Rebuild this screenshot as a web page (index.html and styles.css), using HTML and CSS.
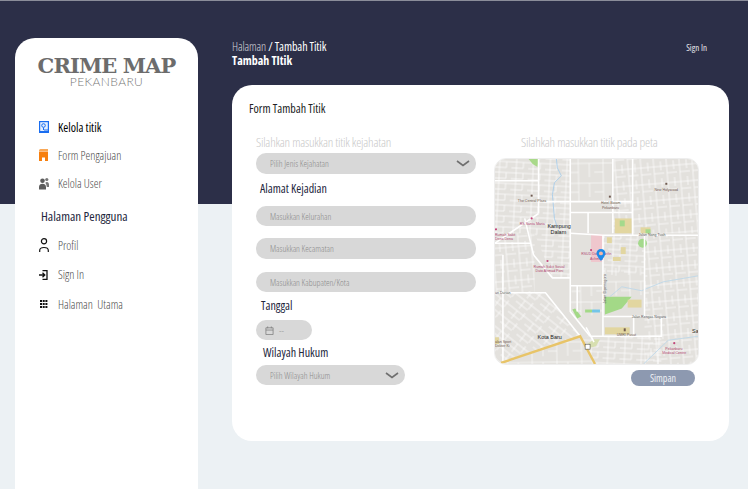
FILE: index.html
```html
<!DOCTYPE html>
<html lang="id">
<head>
<meta charset="utf-8">
<title>Crime Map Pekanbaru</title>
<link rel="stylesheet" href="styles.css">
</head>
<body>
<div class="page">
  <aside class="sidebar">
    <div class="logo">
      <div class="logo-title">CRIME MAP</div>
      <div class="logo-sub">PEKANBARU</div>
    </div>
    <nav class="nav">
      <a class="nav-item active">
        <svg class="ico" viewBox="0 0 10 14"><rect x="0" y="1" width="10" height="12" fill="#1a6df0"/><rect x="1.200" y="2.200" width="7.600" height="8.800" fill="#e3efff"/><circle cx="4.500" cy="5.500" r="1.800" fill="none" stroke="#1a6df0"/><path d="M4.500 7.500V10M5 10H9" stroke="#1a6df0"/></svg>
        <span>Kelola titik</span>
      </a>
      <a class="nav-item">
        <svg class="ico" viewBox="0 0 10 14"><path d="M0 2.500Q0 1 1.500 1H9V3H0z" fill="#f9a857"/><path d="M0 3.500H9V13H6V9.500H3V13H0z" fill="#f77f0e"/></svg>
        <span>Form Pengajuan</span>
      </a>
      <a class="nav-item">
        <svg class="ico" viewBox="0 0 10 14"><circle cx="3.500" cy="4.800" r="2.300" fill="#5c5c5c"/><path d="M0 13.500V11Q.3 7.800 3.500 7.800T7 11v2.500z" fill="#5c5c5c"/><circle cx="7.800" cy="3.500" r="1.600" fill="#777"/><path d="M7.800 6Q10 6 10 9v2H7.800Q7.500 8.200 6.300 6.800 7 6 7.800 6z" fill="#777"/></svg>
        <span>Kelola User</span>
      </a>
    </nav>
    <h2 class="nav-heading">Halaman Pengguna</h2>
    <nav class="nav nav-user">
      <a class="nav-item">
        <svg class="ico" viewBox="0 0 10 14"><circle cx="5" cy="3.300" r="2.600" fill="none" stroke="#111" stroke-width="1.200"/><path d="M.7 14V12.500Q.7 9.500 5 9.500t4.300 3V14" fill="none" stroke="#111" stroke-width="1.200"/></svg>
        <span>Profil</span>
      </a>
      <a class="nav-item">
        <svg class="ico" viewBox="0 0 10 14"><path d="M3.500 2.700H8V11.300H3.500" fill="none" stroke="#111" stroke-width="1.300"/><path d="M0 7H5.500M3.500 4.800 5.800 7 3.500 9.200" fill="none" stroke="#111" stroke-width="1.300"/></svg>
        <span>Sign In</span>
      </a>
      <a class="nav-item">
        <svg class="ico" viewBox="0 0 10 14"><path d="M1 3h2v2H1zM3.700 3h2v2h-2zM6.400 3h2v2h-2zM1 6h2v2H1zM3.700 6h2v2h-2zM6.400 6h2v2h-2zM1 9h2v2H1zM3.700 9h2v2h-2zM6.400 9h2v2h-2z" fill="#111"/></svg>
        <span>Halaman&nbsp; Utama</span>
      </a>
    </nav>
  </aside>

  <main class="main">
    <header class="topbar">
      <div>
        <div class="crumb"><span class="crumb-dim">Halaman</span> / Tambah Titik</div>
        <div class="crumb-title">Tambah TItik</div>
      </div>
      <a class="signin">Sign In</a>
    </header>

    <section class="card">
      <h1 class="card-title">Form Tambah Titik</h1>
      <div class="columns">
        <form class="form">
          <p class="hint">Silahkan masukkan titik kejahatan</p>
          <div class="field select"><span>Pilih Jenis Kejahatan</span><svg class="chev" viewBox="0 0 14 7"><path d="M1 1l6 4.500L13 1" fill="none" stroke="#6f6f6f" stroke-width="1.600"/></svg></div>
          <div class="label label-alamat">Alamat Kejadian</div>
          <div class="field f-kel"><span>Masukkan Kelurahan</span></div>
          <div class="field f-kec"><span>Masukkan Kecamatan</span></div>
          <div class="field f-kab"><span>Masukkan Kabupaten/Kota</span></div>
          <div class="label label-tanggal">Tanggal</div>
          <div class="field date"><svg class="cal" viewBox="0 0 10 10"><path d="M1 2h8v7.500H1zM1 4.500h8M3 .5v2M7 .5v2" fill="none" stroke="#777" stroke-width=".8"/></svg><span>--</span></div>
          <div class="label label-wilayah">Wilayah Hukum</div>
          <div class="field select wilayah"><span>Pilih Wilayah Hukum</span><svg class="chev" viewBox="0 0 14 7"><path d="M1 1l6 4.500L13 1" fill="none" stroke="#6f6f6f" stroke-width="1.600"/></svg></div>
        </form>

        <div class="map-col">
          <p class="hint hint-map">Silahkah masukkan titik pada peta</p>
          <svg class="map" viewBox="0 0 205 207" role="img" aria-label="Peta Pekanbaru">
            <defs>
              <pattern id="a" width="17" height="11" patternUnits="userSpaceOnUse" patternTransform="rotate(3)"><path d="M0 2H17M5 0V11M12 2V8M0 8H12" stroke="#fff" stroke-width=".7" fill="none"/></pattern>
              <pattern id="b" width="13" height="17" patternUnits="userSpaceOnUse" patternTransform="rotate(-5)"><path d="M3 0V17M10 0V9M0 5H13M3 12H13" stroke="#fff" stroke-width=".7" fill="none"/></pattern>
              <pattern id="c" width="21" height="13" patternUnits="userSpaceOnUse" patternTransform="rotate(38)"><path d="M0 3H21M7 3V13M15 0V8M0 9H15" stroke="#fff" stroke-width=".7" fill="none"/></pattern>
              <pattern id="d" width="25" height="20" patternUnits="userSpaceOnUse" patternTransform="rotate(-1)"><path d="M0 6H25M9 0V20M20 6V20M0 15H9" stroke="#fff" stroke-width=".6" fill="none"/></pattern>
            </defs>
            <rect width="205" height="207" fill="#e3e1dd"/>
            <rect x="0" y="0" width="76" height="75" fill="url(#a)"/>
            <rect x="76" y="0" width="43" height="43" fill="url(#d)"/>
            <rect x="119" y="0" width="86" height="75" fill="url(#b)"/>
            <rect x="0" y="75" width="40" height="60" fill="url(#b)"/>
            <path d="M0 135H51l35 44-80 27H0z" fill="url(#c)"/>
            <path d="M40 75H76V120H58z" fill="url(#a)"/>
            <rect x="109" y="77" width="42" height="40" fill="url(#a)"/>
            <rect x="151" y="77" width="54" height="130" fill="url(#b)"/>
            <rect x="76" y="128" width="33" height="30" fill="url(#d)"/>
            <path d="M86 179h82v28H101z" fill="url(#a)"/>
            <path d="M6 207 86 179 101 207z" fill="url(#d)"/>
            <rect x="109" y="110" width="42" height="30" fill="url(#d)"/>
            <!-- areas -->
            <path d="M34 0h10l-1 8-5-3z" fill="#a9d98a"/>
            <rect x="77" y="55" width="41" height="19" fill="#e3e1dd"/>
            <rect x="121" y="60" width="17" height="15" fill="#e2d6a0"/>
            <rect x="126" y="62" width="5" height="6" fill="#a4d98c"/>
            <rect x="147" y="69" width="10" height="6" fill="#e2d6a0"/>
            <rect x="152" y="71" width="5" height="4" fill="#a4d98c"/>
            <circle cx="149" cy="85" r="4.500" fill="#a4d98c"/>
            <rect x="97" y="76" width="12" height="28" fill="#efc7cd"/>
            <path d="M111 139h27l-10 12-17 6z" fill="#a3d987"/>
            <rect x="134" y="142" width="14" height="8" fill="#e2d6a0"/>
            <rect x="91" y="152" width="7" height="3" fill="#a3d987"/>
            <rect x="98" y="152" width="8" height="3" fill="#73c5e8"/>
            <path d="M78 152l3-1 6 8-4 2z" fill="#a3d987"/>
            <rect x="111" y="170" width="25" height="7" fill="#e2d6a0"/>
            <path d="M93 187l7-5h6l-4 7-8 2z" fill="#d7dfb0"/>
            <rect x="0" y="180" width="4" height="7" fill="#e2d6a0"/>
            <rect x="113" y="79" width="5" height="6" fill="#e2d6a0"/><rect x="127" y="89" width="5" height="7" fill="#e2d6a0"/><rect x="119" y="99" width="8" height="4" fill="#e2d6a0"/>
            <!-- water -->
            <path d="M62 0l1 9 4 8-7 7-2 12 2 24 3 9" fill="none" stroke="#a7cdea" stroke-width=".9"/>
            <path d="M205 118l-35 6-22 9-20-4-12 10" fill="none" stroke="#b9d6ea" stroke-width=".8"/>
            <path d="M150 207l25-24 30-4" fill="none" stroke="#b9d6ea" stroke-width=".8"/>
            <!-- main roads -->
            <g fill="none" stroke="#fff" stroke-width="1.600">
              <path d="M76 0V154l20 25"/>
              <path d="M119 0V75M139 0V77"/>
              <path d="M44 0V55"/>
              <path d="M0 22H44M0 85H36"/>
              <path d="M44 43H139M76 54H139M94 54V75"/>
              <path d="M76 75l34 2H205"/>
              <path d="M109 77V179M151 77V159"/>
              <path d="M76 128H109M83 128V154"/>
              <path d="M0 135H51l35 44"/>
              <path d="M39 97l19 23h18"/>
              <path d="M8 97V207M30 60l9 37"/>
              <path d="M109 159H168V179H96M140 159V179"/>
              <path d="M44 55 0 85M92 170l8 15"/>
            </g>
            <path d="M6 206 86 179 101 207" fill="none" stroke="#e8c468" stroke-width="2.400"/>
            <!-- place markers -->
            <g fill="#6f5a50">
              <rect x="172" y="24" width="2" height="2"/><rect x="36" y="36" width="2" height="2"/><rect x="115" y="37" width="2" height="2"/><rect x="130" y="171" width="2" height="3"/>
            </g>
            <g fill="#c2467a">
              <circle cx="37" cy="60" r="1.100"/><circle cx="1" cy="71" r="1.100"/><circle cx="53" cy="103" r="1.100"/><circle cx="181" cy="186" r="1.100"/><circle cx="97" cy="92" r="1.100"/>
            </g>
            <!-- labels -->
            <g class="map-label">
              <text x="161" y="32.500" fill="#6f5a50">New Holywood</text>
              <text x="23" y="43.500" fill="#6f5a50">The Central Plaza</text>
              <text x="107" y="45.500" fill="#6f5a50">Hotel Batam</text>
              <text x="108" y="50" fill="#6f5a50">Pekanbaru</text>
              <text x="145" y="77.500" fill="#555">Jalan Nang Tuah</text>
              <text x="25" y="67" fill="#b04a72">RS Santa Maria</text>
              <text x="0" y="77.500" fill="#b04a72">Rumah Sakit</text>
              <text x="0" y="82" fill="#b04a72">Dena Dena</text>
              <text x="87" y="97" fill="#b04a72">RSUD Dokter Arifin</text>
              <text x="96" y="101.500" fill="#b04a72">Achmad</text>
              <text x="39" y="110" fill="#b04a72">Rumah Sakit Sosial</text>
              <text x="41" y="114.500" fill="#b04a72">Dato Ahmad Poni</text>
              <text x="0" y="136.500" fill="#555">an Durian</text>
              <text x="138" y="160.500" fill="#555">Jalan Rengas Negara</text>
              <text x="123" y="178.500" fill="#6f5a50">UMRI Pusat</text>
              <text x="0" y="186" fill="#6f5a50">alan Sport</text>
              <text x="0" y="190" fill="#6f5a50">Dokter Ki</text>
              <text x="172" y="192.500" fill="#b04a72">Pekanbaru</text>
              <text x="169" y="197" fill="#b04a72">Medical Centre</text>
            </g>
            <g class="map-label-big">
              <text x="53" y="70">Kampung</text>
              <text x="56" y="76">Dalam</text>
              <text x="43" y="182">Kota Baru</text>
              <text x="199" y="176">Sa</text>
            </g>
            <text class="map-label-road" transform="translate(112 146) rotate(-90)">Jalan Dipenogoro</text>
            <rect x="91" y="187" width="5" height="5" fill="#fff" stroke="#333" stroke-width=".5"/>
            <!-- pin -->
            <path d="M107 91c-2.800 0-4.500 2-4.500 4.300 0 2.700 4.500 7.700 4.500 7.700s4.500-5 4.500-7.700c0-2.300-1.700-4.300-4.500-4.300z" fill="#1f8ae8"/>
            <circle cx="107" cy="95.300" r="2" fill="#f3b7a6"/>
          </svg>
          <button class="save" type="button">Simpan</button>
        </div>
      </div>
    </section>
  </main>
</div>
</body>
</html>
```
FILE: styles.css
```css
* { box-sizing: border-box; }
html, body { height: 100%; }
body {
  margin: 0;
  overflow: hidden;
  font-family: "Open Sans", Roboto, sans-serif;
  font-stretch: 75%;
  font-weight: 300;
  background: linear-gradient(#8b8d9a 0 1px, #2c2f48 1px 204px, #ecf1f4 204px);
  color: #1c1f33;
}
.page {
  display: grid;
  grid-template-columns: 183px 497px;
  column-gap: 34px;
  padding: 38px 0 0 15px;
  height: 489px;
}
.sidebar {
  background: #fff;
  border-radius: 20px 20px 0 0;
  height: 451px;
  padding-top: 15px;
}
.logo { text-align: center; color: #6c6c6c; }
.logo-title {
  font-family: "DejaVu Serif", serif;
  font-weight: 700;
  font-stretch: normal;
  font-size: 21px;
  letter-spacing: -.9px;
  line-height: 26px;
}
.logo-sub {
  font-family: Lato, sans-serif;
  font-weight: 300;
  font-stretch: normal;
  font-size: 12px;
  letter-spacing: .4px;
  line-height: 11px;
  color: #777;
  margin-top: -3px;
}
.nav { display: flex; flex-direction: column; margin-top: 31px; padding-left: 24px; row-gap: 10px; }
.nav-item { display: flex; align-items: center; height: 18px; font-size: 12px; color: #4c4c4c; }
.nav-item.active { color: #000; font-weight: 400; }
.nav-item span { margin-left: 9px; }
.ico { width: 10px; height: 14px; flex: none; }
.nav-heading { font-size: 13px; font-weight: 400; margin: 15px 0 0 26px; line-height: 18px; color: #23263c; }
.nav-user { margin-top: 11px; row-gap: 11.500px; }
.main { display: flex; flex-direction: column; min-width: 0; }
.topbar { display: flex; justify-content: space-between; align-items: flex-start; color: #fff; font-size: 12px; height: 47px; padding-right: 22px; padding-top: 1px; }
.crumb { line-height: 15px; font-weight: 400; letter-spacing: -.1px; }
.crumb-dim { color: #d3d4da; font-weight: 300; }
.crumb-title { font-weight: 700; line-height: 14px; }
.signin { font-size: 9px; font-weight: 400; line-height: 18px; color: #e6e7ec; }
.card { background: #fff; border-radius: 20px; height: 356px; padding: 16px 30px 0 17px; }
.card-title { font-size: 12px; font-weight: 400; line-height: 16px; margin: 0; color: #222; }
.columns { display: grid; grid-template-columns: 220px 205px; column-gap: 18px; margin: 17px 0 0 7px; }
.hint { margin: 0; font-size: 13px; letter-spacing: -.22px; line-height: 16px; color: #c9c9c9; }
.form { display: flex; flex-direction: column; }
.field { display: flex; align-items: center; background: #d8d8d8; border-radius: 10px; height: 20px; font-size: 9px; color: #8a8a8a; padding-left: 14px; flex: none; }
.select { justify-content: space-between; padding-right: 6px; margin-top: 3px; height: 21px; }
.chev { width: 14px; height: 7px; }
.label { font-size: 12px; font-weight: 400; line-height: 16px; color: #23263c; }
.label-alamat { margin: 7px 0 0 4px; }
.f-kel { margin-top: 9px; }
.f-kec { margin-top: 12px; height: 21px; }
.f-kab { margin-top: 13px; }
.label-tanggal { margin: 6px 0 0 5px; }
.date { width: 56px; margin-top: 6px; padding-left: 9px; }
.cal { width: 9px; height: 9px; margin-right: 5px; }
.label-wilayah { margin: 5px 0 0 7px; }
.wilayah { width: 149px; margin-top: 4px; height: 20px; }
.map-col { display: flex; flex-direction: column; }
.hint-map { padding-left: 27px; }
.map { width: 205px; height: 207px; border-radius: 12px; border: 1px solid #eee; margin-top: 8px; display: block; flex: none; }
.map text { font-family: "Liberation Sans", sans-serif; font-stretch: normal; font-weight: 400; letter-spacing: 0; }
.map-label { font-size: 3.600px; }
.map-label-big { font-size: 5.500px; fill: #222; }
.map-label-road { font-size: 3.800px; fill: #555; }
.save { align-self: flex-end; width: 64px; height: 16px; margin: 5px 4px 0 0; padding: 0; border: 0; border-radius: 8px; background: #8d99b0; color: #eef0f4; font: 400 10px "Open Sans", sans-serif; font-stretch: 75%; }
```
